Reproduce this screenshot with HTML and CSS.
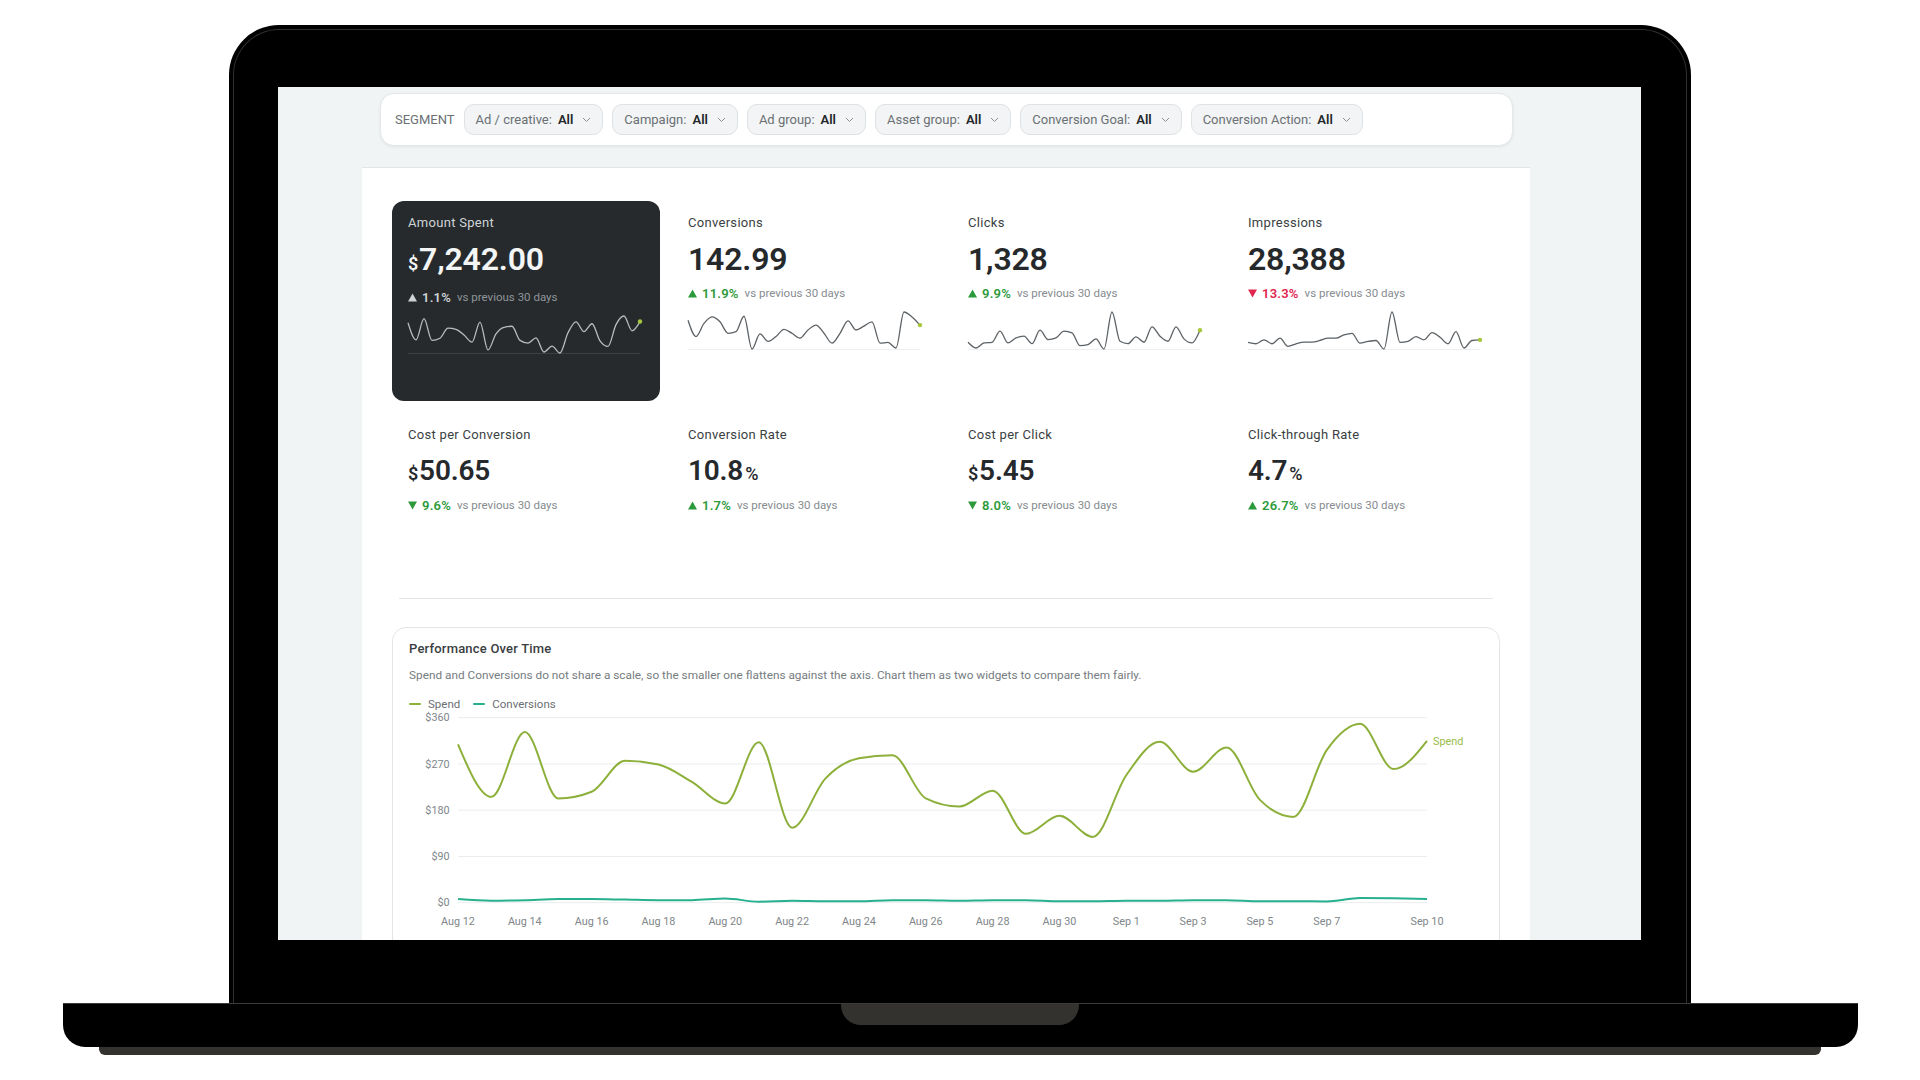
FILE: index.html
```html
<!DOCTYPE html>
<html lang="en">
<head>
    <meta charset="UTF-8">
    <meta name="viewport" content="width=device-width, initial-scale=1.0">
    <title>Ads Performance</title>
    <link rel="stylesheet" href="styles.css">
</head>
<body>
    <div class="laptop">
        <div class="bezel">
            <div class="screen">
                <div class="segment-bar">
                    <span class="segment-label">SEGMENT</span>
                    <button class="chip"><span class="chip-key">Ad / creative:</span><span class="chip-val">All</span><svg class="chev" width="9" height="9" viewBox="0 0 9 9"><path d="M1 3l3.5 3.5L8 3"/></svg></button>
                    <button class="chip"><span class="chip-key">Campaign:</span><span class="chip-val">All</span><svg class="chev" width="9" height="9" viewBox="0 0 9 9"><path d="M1 3l3.5 3.5L8 3"/></svg></button>
                    <button class="chip"><span class="chip-key">Ad group:</span><span class="chip-val">All</span><svg class="chev" width="9" height="9" viewBox="0 0 9 9"><path d="M1 3l3.5 3.5L8 3"/></svg></button>
                    <button class="chip"><span class="chip-key">Asset group:</span><span class="chip-val">All</span><svg class="chev" width="9" height="9" viewBox="0 0 9 9"><path d="M1 3l3.5 3.5L8 3"/></svg></button>
                    <button class="chip"><span class="chip-key">Conversion Goal:</span><span class="chip-val">All</span><svg class="chev" width="9" height="9" viewBox="0 0 9 9"><path d="M1 3l3.5 3.5L8 3"/></svg></button>
                    <button class="chip"><span class="chip-key">Conversion Action:</span><span class="chip-val">All</span><svg class="chev" width="9" height="9" viewBox="0 0 9 9"><path d="M1 3l3.5 3.5L8 3"/></svg></button>
                </div>

                <div class="panel">
                    <div class="metrics">
                        <div class="metric metric-active">
                            <div class="metric-label">Amount Spent</div>
                            <div class="metric-value"><span class="unit">$</span>7,242.00</div>
                            <div class="metric-delta neutral"><span class="delta-pct"><svg class="tri" width="9" height="9" viewBox="0 0 9 9"><path d="M4.5 0.5L9 8.5H0z"/></svg>1.1%</span><span class="delta-note">vs previous 30 days</span></div>
                            <svg class="spark" data-series="spend" width="236" height="46" viewBox="0 0 236 46"></svg>
                        </div>
                        <div class="metric">
                            <div class="metric-label">Conversions</div>
                            <div class="metric-value">142.99</div>
                            <div class="metric-delta good"><span class="delta-pct"><svg class="tri" width="9" height="9" viewBox="0 0 9 9"><path d="M4.5 0.5L9 8.5H0z"/></svg>11.9%</span><span class="delta-note">vs previous 30 days</span></div>
                            <svg class="spark" data-series="conversions" width="236" height="46" viewBox="0 0 236 46"></svg>
                        </div>
                        <div class="metric">
                            <div class="metric-label">Clicks</div>
                            <div class="metric-value">1,328</div>
                            <div class="metric-delta good"><span class="delta-pct"><svg class="tri" width="9" height="9" viewBox="0 0 9 9"><path d="M4.5 0.5L9 8.5H0z"/></svg>9.9%</span><span class="delta-note">vs previous 30 days</span></div>
                            <svg class="spark" data-series="clicks" width="236" height="46" viewBox="0 0 236 46"></svg>
                        </div>
                        <div class="metric">
                            <div class="metric-label">Impressions</div>
                            <div class="metric-value">28,388</div>
                            <div class="metric-delta bad"><span class="delta-pct"><svg class="tri" width="9" height="9" viewBox="0 0 9 9"><path d="M0 0.5H9L4.5 8.5z"/></svg>13.3%</span><span class="delta-note">vs previous 30 days</span></div>
                            <svg class="spark" data-series="impressions" width="236" height="46" viewBox="0 0 236 46"></svg>
                        </div>

                        <div class="metric metric-small">
                            <div class="metric-label">Cost per Conversion</div>
                            <div class="metric-value"><span class="unit">$</span>50.65</div>
                            <div class="metric-delta good"><span class="delta-pct"><svg class="tri" width="9" height="9" viewBox="0 0 9 9"><path d="M0 0.5H9L4.5 8.5z"/></svg>9.6%</span><span class="delta-note">vs previous 30 days</span></div>
                        </div>
                        <div class="metric metric-small">
                            <div class="metric-label">Conversion Rate</div>
                            <div class="metric-value">10.8<span class="unit unit-after">%</span></div>
                            <div class="metric-delta good"><span class="delta-pct"><svg class="tri" width="9" height="9" viewBox="0 0 9 9"><path d="M4.5 0.5L9 8.5H0z"/></svg>1.7%</span><span class="delta-note">vs previous 30 days</span></div>
                        </div>
                        <div class="metric metric-small">
                            <div class="metric-label">Cost per Click</div>
                            <div class="metric-value"><span class="unit">$</span>5.45</div>
                            <div class="metric-delta good"><span class="delta-pct"><svg class="tri" width="9" height="9" viewBox="0 0 9 9"><path d="M0 0.5H9L4.5 8.5z"/></svg>8.0%</span><span class="delta-note">vs previous 30 days</span></div>
                        </div>
                        <div class="metric metric-small">
                            <div class="metric-label">Click-through Rate</div>
                            <div class="metric-value">4.7<span class="unit unit-after">%</span></div>
                            <div class="metric-delta good"><span class="delta-pct"><svg class="tri" width="9" height="9" viewBox="0 0 9 9"><path d="M4.5 0.5L9 8.5H0z"/></svg>26.7%</span><span class="delta-note">vs previous 30 days</span></div>
                        </div>
                    </div>

                    <div class="divider"></div>

                    <div class="chart-card">
                        <div class="chart-title">Performance Over Time</div>
                        <div class="chart-note">Spend and Conversions do not share a scale, so the smaller one flattens against the axis. Chart them as two widgets to compare them fairly.</div>
                        <div class="legend">
                            <span class="legend-item"><i class="legend-line spend"></i>Spend</span>
                            <span class="legend-item"><i class="legend-line conv"></i>Conversions</span>
                        </div>
                        <svg class="chart" id="chart" width="1075" height="230" viewBox="0 0 1075 230">
                            <g class="grid">
                                <line x1="49" x2="1018" y1="6.7" y2="6.7"/>
                                <line x1="49" x2="1018" y1="52.95" y2="52.95"/>
                                <line x1="49" x2="1018" y1="99.2" y2="99.2"/>
                                <line x1="49" x2="1018" y1="145.45" y2="145.45"/>
                                <line x1="49" x2="1018" y1="191.7" y2="191.7"/>
                            </g>
                            <g class="y-labels">
                                <text x="40.6" y="10.4">$360</text>
                                <text x="40.6" y="56.65">$270</text>
                                <text x="40.6" y="102.9">$180</text>
                                <text x="40.6" y="149.15">$90</text>
                                <text x="40.6" y="195.4">$0</text>
                            </g>
                            <g class="x-labels">
                                <text x="49" y="213.5">Aug 12</text>
                                <text x="115.8" y="213.5">Aug 14</text>
                                <text x="182.7" y="213.5">Aug 16</text>
                                <text x="249.5" y="213.5">Aug 18</text>
                                <text x="316.3" y="213.5">Aug 20</text>
                                <text x="383.1" y="213.5">Aug 22</text>
                                <text x="450" y="213.5">Aug 24</text>
                                <text x="516.8" y="213.5">Aug 26</text>
                                <text x="583.6" y="213.5">Aug 28</text>
                                <text x="650.5" y="213.5">Aug 30</text>
                                <text x="717.3" y="213.5">Sep 1</text>
                                <text x="784.1" y="213.5">Sep 3</text>
                                <text x="850.9" y="213.5">Sep 5</text>
                                <text x="917.8" y="213.5">Sep 7</text>
                                <text x="1018" y="213.5">Sep 10</text>
                            </g>
                            <path id="convLine" class="line-conv"/>
                            <path id="spendLine" class="line-spend"/>
                            <text class="end-label" x="1024" y="33.5">Spend</text>
                        </svg>
                    </div>
                </div>
            </div>
        </div>
        <div class="base"><div class="notch"></div></div>
        <div class="base-foot"></div>
    </div>

    <script>
        const series = {
            spend: [308, 206, 332, 203, 216, 276, 269, 235, 193, 312, 146, 242, 281, 287, 203, 187, 218, 134, 169, 128, 248, 313, 255, 302, 200, 167, 297, 348, 260, 315],
            conversions: [110, 60, 100, 120, 105, 70, 75, 122, 22, 68, 45, 60, 82, 70, 55, 80, 95, 70, 40, 70, 108, 80, 92, 105, 40, 42, 25, 135, 120, 95],
            clicks: [42, 25, 40, 42, 75, 40, 55, 60, 38, 78, 50, 55, 75, 70, 32, 35, 52, 22, 132, 45, 38, 58, 42, 88, 60, 45, 88, 52, 40, 78],
            impressions: [42, 38, 50, 38, 55, 30, 38, 43, 43, 48, 55, 55, 65, 70, 40, 45, 48, 22, 135, 42, 45, 60, 50, 72, 58, 38, 75, 25, 48, 50]
        };
        const dailyConversions = [7, 4, 5, 7, 7, 6, 5, 5, 8, 2, 4, 3, 3, 5, 5, 4, 5, 5, 3, 3, 4, 4, 5, 5, 3, 3, 2.5, 9, 8.5, 7];

        // monotone cubic, same idea as d3.curveMonotoneX
        function smoothPath(pts) {
            const n = pts.length;
            const s = [];
            const t = [];
            for (let i = 0; i < n - 1; i++) {
                s.push((pts[i + 1][1] - pts[i][1]) / (pts[i + 1][0] - pts[i][0]));
            }
            for (let i = 1; i < n - 1; i++) {
                const h0 = pts[i][0] - pts[i - 1][0];
                const h1 = pts[i + 1][0] - pts[i][0];
                const p = (s[i - 1] * h1 + s[i] * h0) / (h0 + h1);
                t[i] = (Math.sign(s[i - 1]) + Math.sign(s[i])) * Math.min(Math.abs(s[i - 1]), Math.abs(s[i]), 0.5 * Math.abs(p)) || 0;
            }
            t[0] = (3 * s[0] - t[1]) / 2;
            t[n - 1] = (3 * s[n - 2] - t[n - 2]) / 2;
            let d = `M${pts[0][0].toFixed(2)},${pts[0][1].toFixed(2)}`;
            for (let i = 0; i < n - 1; i++) {
                const [x0, y0] = pts[i];
                const [x1, y1] = pts[i + 1];
                const h = (x1 - x0) / 3;
                d += `C${(x0 + h).toFixed(2)},${(y0 + t[i] * h).toFixed(2)} ${(x1 - h).toFixed(2)},${(y1 - t[i + 1] * h).toFixed(2)} ${x1.toFixed(2)},${y1.toFixed(2)}`;
            }
            return d;
        }

        const NS = "http://www.w3.org/2000/svg";

        document.querySelectorAll(".spark").forEach(svg => {
            const data = series[svg.dataset.series];
            const min = Math.min(...data);
            const max = Math.max(...data);
            const pts = data.map((v, i) => [i * 232 / (data.length - 1), 5 + (1 - (v - min) / (max - min)) * 37]);

            const base = document.createElementNS(NS, "line");
            base.setAttribute("class", "spark-base");
            base.setAttribute("x1", 0);
            base.setAttribute("x2", 232);
            base.setAttribute("y1", 42.5);
            base.setAttribute("y2", 42.5);
            svg.appendChild(base);

            const path = document.createElementNS(NS, "path");
            path.setAttribute("class", "spark-line");
            path.setAttribute("d", smoothPath(pts));
            svg.appendChild(path);

            const last = pts[pts.length - 1];
            const dot = document.createElementNS(NS, "circle");
            dot.setAttribute("class", "spark-dot");
            dot.setAttribute("cx", last[0]);
            dot.setAttribute("cy", last[1]);
            dot.setAttribute("r", 2.2);
            svg.appendChild(dot);
        });

        const x = i => 49 + i * 969 / 29;
        const y = v => 191.7 - v * 185 / 360;
        document.getElementById("spendLine").setAttribute("d", smoothPath(series.spend.map((v, i) => [x(i), y(v)])));
        document.getElementById("convLine").setAttribute("d", smoothPath(dailyConversions.map((v, i) => [x(i), y(v)])));
    </script>
</body>
</html>
```

FILE: styles.css
```css
/* page + laptop frame */
body {
    margin: 0;
    background: #fff;
    font-family: Roboto, "Liberation Sans", sans-serif;
    color: #26292c;
}

.laptop {
    width: 1920px;
    padding-top: 25px;
}

.bezel {
    position: relative;
    box-sizing: border-box;
    width: 1462px;
    height: 978px;
    margin: 0 auto;
    padding: 62px 50px 0 49px;
    background: #000;
    border-radius: 50px 50px 0 0;
}

/* thin highlight ring just inside the bezel edge */
.bezel::before {
    content: "";
    position: absolute;
    inset: 4px 4px 0 4px;
    border: 1px solid #2f2f2f;
    border-bottom: none;
    border-radius: 46px 46px 0 0;
    pointer-events: none;
}

.screen {
    position: relative;
    box-sizing: border-box;
    width: 1363px;
    height: 853px;
    padding-left: 84px;
    background: #f1f4f5;
    overflow: hidden;
}

.base {
    display: flex;
    justify-content: center;
    box-sizing: border-box;
    width: 1795px;
    height: 44px;
    margin: 0 auto;
    background: #000;
    border-top: 1px solid #3a3a3a;
    border-radius: 0 0 22px 22px;
}

.notch {
    width: 238px;
    height: 21px;
    background: #34322e;
    border-radius: 0 0 20px 20px;
}

.base-foot {
    width: 1722px;
    height: 8px;
    margin: 0 auto;
    background: #34322e;
    border-radius: 0 0 6px 6px;
}

/* segment filter bar */
.segment-bar {
    display: flex;
    align-items: center;
    gap: 9px;
    box-sizing: border-box;
    width: 1133px;
    height: 53px;
    margin: 6px 0 0 18px;
    padding: 0 14px;
    background: #fff;
    border: 1px solid #e4e8ea;
    border-radius: 14px;
    box-shadow: 0 1px 3px rgba(20, 30, 40, 0.07);
}

.segment-label {
    font-size: 13px;
    color: #6b7074;
}

.chip {
    display: inline-flex;
    align-items: center;
    gap: 6px;
    height: 31px;
    padding: 0 11px;
    font-family: inherit;
    font-size: 13px;
    background: #f2f4f5;
    border: 1px solid #dde2e4;
    border-radius: 10px;
    cursor: pointer;
}

.chip-key {
    color: #6b7074;
}

.chip-val {
    color: #24282b;
    font-weight: 600;
}

.chev {
    margin-left: 3px;
    fill: none;
    stroke: #8a9094;
    stroke-width: 1;
}

/* main white panel */
.panel {
    box-sizing: border-box;
    width: 1168px;
    min-height: 700px;
    margin-top: 21px;
    padding: 33px 30px 0;
    background: #fff;
    border-top: 1px solid #e1e5e7;
}

.metrics {
    display: grid;
    grid-template-columns: repeat(4, 268px);
    grid-template-rows: 200px 150px;
    gap: 12px;
}

.metric {
    box-sizing: border-box;
    padding: 14px 16px 0;
    border-radius: 12px;
}

.metric-label {
    font-size: 13px;
    line-height: 16px;
    letter-spacing: 0.3px;
    color: #3b3f42;
}

.metric-value {
    margin-top: 10px;
    font-size: 32px;
    line-height: 36px;
    font-weight: 600;
    color: #26292c;
    letter-spacing: -0.2px;
}

.metric-small .metric-value {
    font-size: 28px;
}

.unit {
    font-size: 18px;
    line-height: 0;
    font-weight: 600;
    margin-right: 1px;
}

.unit-after {
    margin: 0 0 0 2px;
    font-weight: 500;
}

.metric-delta {
    display: flex;
    align-items: center;
    gap: 6px;
    margin-top: 8px;
    height: 16px;
}

.delta-pct {
    display: inline-flex;
    align-items: center;
    gap: 5px;
    font-size: 13px;
    font-weight: 600;
    letter-spacing: 0.2px;
}

.tri {
    fill: currentColor;
}

.delta-note {
    font-size: 11.5px;
    color: #858b8f;
}

.good .delta-pct { color: #2c9a3a; }
.bad .delta-pct { color: #e0264f; }
.neutral .delta-pct { color: #d0d3d5; }

.spark {
    display: block;
    margin-top: 6px;
    overflow: visible;
}

.spark-base {
    stroke: #eceeef;
    stroke-width: 1;
}

.spark-line {
    fill: none;
    stroke: #5d6266;
    stroke-width: 1.3;
}

.spark-dot {
    fill: #a6c73a;
}

/* highlighted card */
.metric-active {
    background: #262a2d;
}

.metric-active .metric-label { color: #cfd3d5; }
.metric-active .metric-value { color: #f4f5f5; }
.metric-active .metric-delta { margin-top: 12px; }
.metric-active .delta-note { color: #8f9599; }
.metric-active .spark-line { stroke: #b8bcbf; }
.metric-active .spark-base { stroke: #3b4043; }

.divider {
    height: 1px;
    margin: 35px 7px 0;
    background: #e3e6e8;
}

/* performance chart */
.chart-card {
    margin-top: 28px;
    padding: 13px 16px 0;
    height: 400px;
    border: 1px solid #e2e6e8;
    border-radius: 14px;
}

.chart-title {
    font-size: 13px;
    line-height: 16px;
    font-weight: 500;
    letter-spacing: 0.2px;
    color: #3a3e41;
}

.chart-note {
    margin-top: 11px;
    font-size: 11.8px;
    line-height: 14px;
    color: #767c80;
}

.legend {
    display: flex;
    align-items: center;
    gap: 13px;
    margin-top: 15px;
    height: 14px;
    font-size: 11.5px;
    color: #6b7074;
}

.legend-item {
    display: inline-flex;
    align-items: center;
    gap: 7px;
}

.legend-line {
    display: inline-block;
    width: 12px;
    height: 2px;
    border-radius: 1px;
}

.legend-line.spend { background: #8cb03a; }
.legend-line.conv { background: #27b08e; }

.chart {
    display: block;
    overflow: visible;
}

.grid line {
    stroke: #e9ecee;
    stroke-width: 1;
}

.y-labels text {
    font-size: 10.8px;
    fill: #80868a;
    text-anchor: end;
}

.x-labels text {
    font-size: 10.8px;
    fill: #80868a;
    text-anchor: middle;
}

.line-spend {
    fill: none;
    stroke: #8cb03a;
    stroke-width: 2;
}

.line-conv {
    fill: none;
    stroke: #27b08e;
    stroke-width: 2;
}

.end-label {
    font-size: 10.8px;
    fill: #97bb45;
}
```
